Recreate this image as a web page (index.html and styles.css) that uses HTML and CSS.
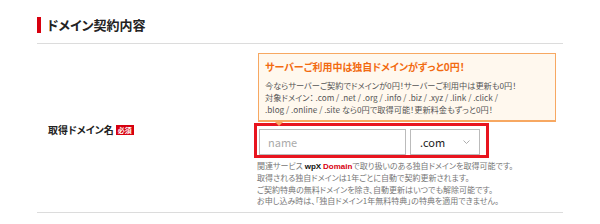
FILE: index.html
```html
<!DOCTYPE html>
<html lang="ja">
<head>
  <meta charset="UTF-8">
  <title>ドメイン契約内容</title>
  <link rel="stylesheet" href="styles.css">
</head>
<body>
  <div class="section">
    <h2 class="section-title">ドメイン契約内容</h2>
    <div class="form-row">
      <div class="label">
        取得ドメイン名
        <span class="required">必須</span>
      </div>
      <div class="field">
        <div class="promo">
          <div class="promo-title">サーバーご利用中は独自ドメインがずっと0円！</div>
          <p>
            今ならサーバーご契約でドメインが0円！サーバーご利用中は更新も0円！<br>
            対象ドメイン： .com / .net / .org / .info / .biz / .xyz / .link / .click /<br>
            .blog / .online / .site なら0円で取得可能！更新料金もずっと0円！
          </p>
        </div>
        <div class="domain-box">
          <input class="domain-input" type="text" placeholder="name">
          <div class="tld-select">
            <span>.com</span>
            <svg width="7" height="4" viewBox="0 0 7 4" fill="none" stroke="#999" stroke-width="0.8">
              <path d="M0.5 0.5L3.5 3.5L6.5 0.5"></path>
            </svg>
          </div>
        </div>
        <p class="notes">
          関連サービス <b class="wpx">wpX</b> <b class="wpx-domain">Domain</b>で取り扱いのある独自ドメインを取得可能です。<br>
          取得される独自ドメインは1年ごとに自動で契約更新されます。<br>
          ご契約特典の無料ドメインを除き、自動更新はいつでも解除可能です。<br>
          お申し込み時は、「独自ドメイン1年無料特典」の特典を適用できません。
        </p>
      </div>
    </div>
  </div>
</body>
</html>
```

FILE: styles.css
```css
body {
  margin: 0;
  background: #fff;
  font-family: "Noto Sans CJK JP", sans-serif;
  color: #333;
}
.section {
  width: 526px;
  margin-left: 37px;
  padding-top: 17px;
}
.section-title {
  margin: 0;
  border-left: 4px solid #d7000f;
  padding-left: 6px;
  height: 16px;
  line-height: 16px;
  font-size: 13px;
  font-weight: bold;
  color: #222;
  font-feature-settings: "palt";
}
.form-row {
  display: flex;
  align-items: center;
  margin-top: 10px;
  border-top: 1px solid #dcdcdc;
  border-bottom: 1px solid #dcdcdc;
  padding: 9px 0 6px;
}
.label {
  width: 206px;
  padding-left: 11px;
  display: flex;
  align-items: center;
  gap: 2px;
  font-size: 10px;
  font-weight: bold;
  color: #222;
  font-feature-settings: "palt";
}
.required {
  background: #d7000f;
  color: #fff;
  font-size: 7px;
  padding: 1px 2px;
  line-height: 8px;
}
.field {
  flex: 1;
}
.promo {
  position: relative;
  margin-left: 4px;
  width: 287px;
  background: #fff8ee;
  border: 1px solid #f7a862;
  border-bottom-width: 2px;
  padding: 6px 3px 5px 6px;
  font-feature-settings: "palt";
}
.promo::after {
  content: "";
  position: absolute;
  left: 16px;
  bottom: -6px;
  border-left: 4px solid transparent;
  border-right: 4px solid transparent;
  border-top: 4px solid #f7a862;
}
.promo-title {
  color: #f26a10;
  font-size: 10px;
  font-weight: bold;
  line-height: 14px;
}
.promo p {
  margin: 5px 0 0;
  font-size: 8.2px;
  line-height: 12px;
  color: #555;
}
.domain-box {
  display: flex;
  gap: 4px;
  width: 225px;
  margin-top: 1px;
  border: 3px solid #e8141e;
  padding: 3px 2px 0;
}
.domain-input {
  width: 147px;
  height: 26px;
  box-sizing: border-box;
  border: 1px solid #bbb;
  padding: 0 8px;
  font-family: inherit;
  font-size: 11px;
  color: #333;
  outline: none;
}
.domain-input::placeholder {
  color: #aaa;
}
.tld-select {
  width: 70px;
  height: 26px;
  box-sizing: border-box;
  border: 1px solid #bbb;
  display: flex;
  align-items: center;
  justify-content: space-between;
  padding: 0 9px 0 9px;
  font-size: 11px;
  color: #222;
}
.notes {
  margin: 2px 0 0 3px;
  font-size: 8px;
  line-height: 11.3px;
  color: #777;
  font-feature-settings: "palt";
}
.wpx {
  color: #111;
  font-family: "Liberation Sans", sans-serif;
}
.wpx-domain {
  color: #d7000f;
  font-family: "Liberation Sans", sans-serif;
}
```
